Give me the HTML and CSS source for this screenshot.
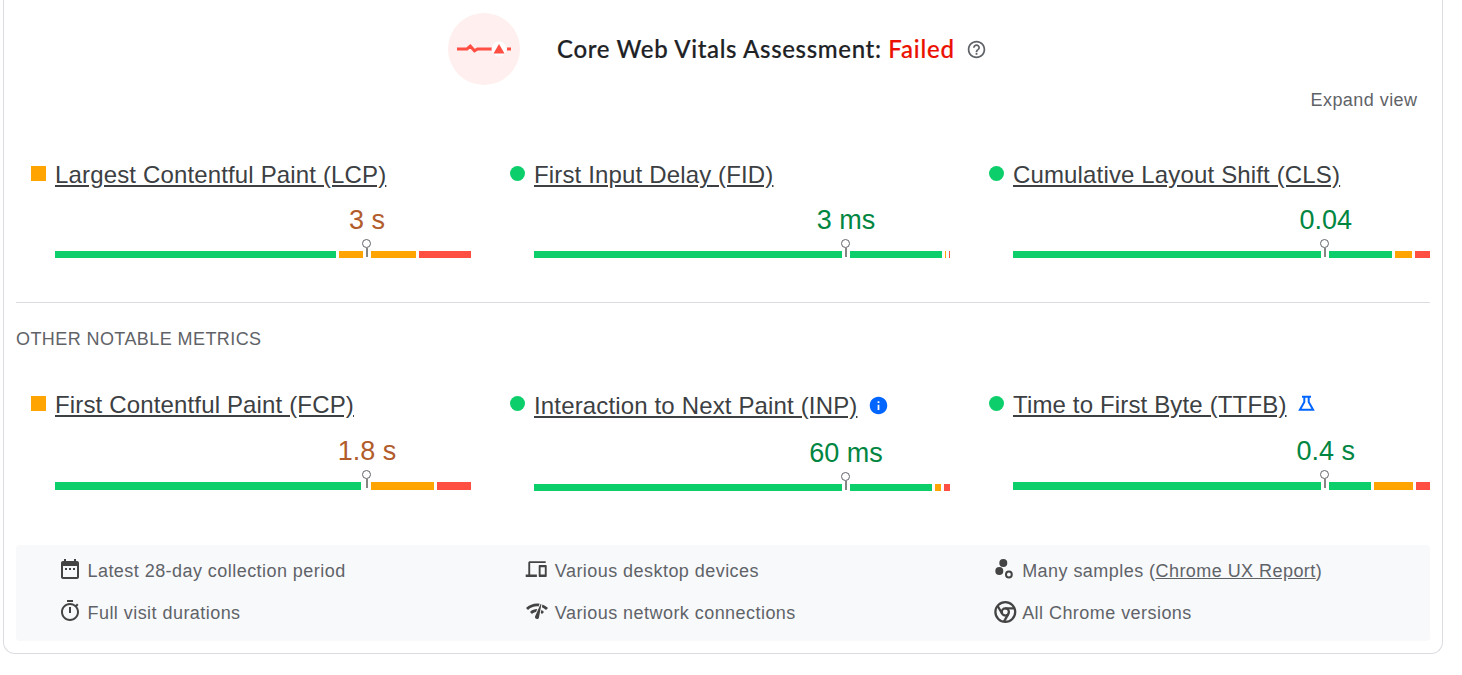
FILE: index.html
```html
<!DOCTYPE html>
<html lang="en">
<head>
  <meta charset="utf-8">
  <title>Core Web Vitals Assessment</title>
  <link rel="stylesheet" href="styles.css">
</head>
<body>
<div class="card">
  <div class="header">
    <svg class="pulse" width="72" height="72" viewBox="0 0 72 72">
      <circle cx="36" cy="36" r="36" fill="#ffefee"/>
      <path d="M9 36h10l3.300-2.800 4.200 4.600 3-1.800H45M59 36h4" fill="none" stroke="#ff4e42" stroke-width="3"/>
      <circle cx="51" cy="36" r="7.500" fill="#fff"/>
      <path d="M45.500 40.500 51 31l5.500 9.500z" fill="#ff4e42"/>
    </svg>
    <div class="title">Core Web Vitals Assessment: <span class="failed">Failed</span></div>
    <svg class="help" width="21" height="21" viewBox="0 0 24 24">
      <path d="M11 18h2v-2h-2v2zm1-16C6.480 2 2 6.480 2 12s4.480 10 10 10 10-4.480 10-10S17.520 2 12 2zm0 18c-4.410 0-8-3.590-8-8s3.590-8 8-8 8 3.590 8 8-3.590 8-8 8zm0-14c-2.210 0-4 1.790-4 4h2c0-1.100.9-2 2-2s2 .9 2 2c0 2-3 1.750-3 5h2c0-2.250 3-2.500 3-5 0-2.210-1.790-4-4-4z"/>
    </svg>
  </div>
  <div class="expand">Expand view</div>

  <div class="metrics">
    <div class="metric average">
      <span class="marker"></span>
      <div class="name"><a>Largest Contentful Paint (LCP)</a></div>
      <div class="value"><span>3 s</span></div>
      <div class="bar">
        <i class="good" style="flex-grow:281"></i><i class="mid" style="flex-grow:77"></i><i class="poor" style="flex-grow:52"></i>
        <span class="pin"></span>
      </div>
    </div>
    <div class="metric fast">
      <span class="marker"></span>
      <div class="name"><a>First Input Delay (FID)</a></div>
      <div class="value"><span>3 ms</span></div>
      <div class="bar">
        <i class="good" style="flex-grow:408"></i><i class="mid" style="flex-grow:1"></i><i class="poor" style="flex-grow:1"></i>
        <span class="pin"></span>
      </div>
    </div>
    <div class="metric fast">
      <span class="marker"></span>
      <div class="name"><a>Cumulative Layout Shift (CLS)</a></div>
      <div class="value"><span>0.04</span></div>
      <div class="bar">
        <i class="good" style="flex-grow:379"></i><i class="mid" style="flex-grow:17"></i><i class="poor" style="flex-grow:15"></i>
        <span class="pin"></span>
      </div>
    </div>
  </div>

  <div class="subtitle">OTHER NOTABLE METRICS</div>

  <div class="metrics other">
    <div class="metric average">
      <span class="marker"></span>
      <div class="name"><a>First Contentful Paint (FCP)</a></div>
      <div class="value"><span>1.8 s</span></div>
      <div class="bar">
        <i class="good" style="flex-grow:306"></i><i class="mid" style="flex-grow:70"></i><i class="poor" style="flex-grow:34"></i>
        <span class="pin"></span>
      </div>
    </div>
    <div class="metric fast inp">
      <span class="marker"></span>
      <div class="name"><a>Interaction to Next Paint (INP)</a>
        <svg class="info" width="21" height="21" viewBox="0 0 24 24"><path d="M12 2C6.480 2 2 6.480 2 12s4.480 10 10 10 10-4.480 10-10S17.520 2 12 2zm1 15h-2v-6h2v6zm0-8h-2V7h2v2z"/></svg>
      </div>
      <div class="value"><span>60 ms</span></div>
      <div class="bar">
        <i class="good" style="flex-grow:398"></i><i class="mid" style="flex-grow:6"></i><i class="poor" style="flex-grow:6"></i>
        <span class="pin"></span>
      </div>
    </div>
    <div class="metric fast">
      <span class="marker"></span>
      <div class="name"><a>Time to First Byte (TTFB)</a>
        <svg class="flask" width="17" height="17" viewBox="0 0 17 17"><path d="M4 1.800h9M6.300 2v5L1.900 14.800h13.200L10.700 7V2"/></svg>
      </div>
      <div class="value"><span>0.4 s</span></div>
      <div class="bar">
        <i class="good" style="flex-grow:358"></i><i class="mid" style="flex-grow:39"></i><i class="poor" style="flex-grow:14"></i>
        <span class="pin"></span>
      </div>
    </div>
  </div>

  <div class="footer">
    <div class="item">
      <svg width="24" height="24" viewBox="0 0 24 24"><path d="M9 11H7v2h2v-2zm4 0h-2v2h2v-2zm4 0h-2v2h2v-2zm2-7h-1V2h-2v2H8V2H6v2H5c-1.110 0-1.990.9-1.990 2L3 20c0 1.100.89 2 2 2h14c1.100 0 2-.9 2-2V6c0-1.100-.9-2-2-2zm0 16H5V9h14v11z"/></svg>
      <span>Latest 28-day collection period</span>
    </div>
    <div class="item">
      <svg width="24" height="24" viewBox="0 0 24 24"><path fill-rule="evenodd" d="M20.700 4.200H5c-1 0-1.700.7-1.700 1.700v11.500H.7V20h11.200v-2.600H5.200V6h15.500zM14.700 8h6c.6 0 1 .4 1 1v10c0 .6-.4 1-1 1h-6c-.6 0-1-.4-1-1V9c0-.6.4-1 1-1zm.9 2.200v7.200h4.200v-7.200z"/></svg>
      <span>Various desktop devices</span>
    </div>
    <div class="item">
      <svg width="24" height="24" viewBox="0 0 24 24">
        <circle cx="10.300" cy="6" r="4"/><circle cx="6.300" cy="14" r="4"/>
        <circle class="line" cx="15.900" cy="17.500" r="2.900"/>
      </svg>
      <span>Many samples (<a>Chrome UX Report</a>)</span>
    </div>
    <div class="item">
      <svg width="24" height="24" viewBox="0 0 24 24"><path d="M15 1H9v2h6V1zm-4 13h2V8h-2v6zm8.030-6.610l1.420-1.420c-.43-.51-.9-.99-1.410-1.410l-1.420 1.420C16.070 4.740 14.120 4 12 4c-4.970 0-9 4.030-9 9s4.020 9 9 9 9-4.030 9-9c0-2.120-.74-4.070-1.970-5.610zM12 20c-3.870 0-7-3.130-7-7s3.130-7 7-7 7 3.130 7 7-3.130 7-7 7z"/></svg>
      <span>Full visit durations</span>
    </div>
    <div class="item">
      <svg width="24" height="24" viewBox="0 0 24 24"><path d="M15.900 5c-.17 0-.32.09-.41.23l-.07.15-5.180 11.650c-.16.29-.26.61-.26.96 0 1.110.9 2.010 2.010 2.010.96 0 1.770-.68 1.960-1.590l.01-.03L16.400 5.500c0-.28-.22-.5-.5-.5zM1 9l2 2c2.880-2.880 6.790-4.080 10.530-3.620l1.190-2.680C9.890 3.840 4.740 5.270 1 9zm20 2l2-2c-1.640-1.640-3.550-2.820-5.590-3.570l-.53 2.820c1.500.62 2.900 1.530 4.120 2.750zm-4 4l2-2c-.8-.8-1.700-1.420-2.660-1.890l-.55 2.920c.42.27.83.59 1.210.97zM5 13l2 2c1.130-1.130 2.560-1.790 4.030-2l1.280-2.880c-2.630-.08-5.300.87-7.310 2.880z"/></svg>
      <span>Various network connections</span>
    </div>
    <div class="item">
      <svg width="24" height="24" viewBox="0 0 24 24">
        <g class="line thick">
          <circle cx="12.300" cy="13" r="9.900"/><circle cx="12.300" cy="13" r="3.600"/>
          <path d="M12.300 9.400h9"/>
          <path d="M12.300 9.400h9" transform="rotate(120 12.300 13)"/>
          <path d="M12.300 9.400h9" transform="rotate(240 12.300 13)"/>
        </g>
      </svg>
      <span>All Chrome versions</span>
    </div>
  </div>
</div>
</body>
</html>
```
FILE: styles.css
```css
body {
  margin: 0;
  background: #fff;
  font-family: "Liberation Sans", Arial, sans-serif;
  font-size: 18px;
  line-height: 27px;
  letter-spacing: 0.45px;
  color: #5f6368;
}
.card {
  box-sizing: border-box;
  width: 1440px;
  height: 654px;
  margin-left: 3px;
  padding: 13px 12px 0;
  border: 1px solid #dadce0;
  border-top: none;
  border-radius: 0 0 12px 12px;
}

/* assessment header */
.header {
  display: flex;
  align-items: center;
  height: 72px;
  padding-left: 432px;
}
.title {
  margin-left: 37px;
  font-family: Lato, sans-serif;
  font-size: 24px;
  font-weight: 500;
  line-height: 36px;
  letter-spacing: 0.66px;
  color: #202124;
  white-space: nowrap;
  -webkit-text-stroke: 0.2px;
}
.failed {
  letter-spacing: 0.8px;
  color: #eb0f00;
}
.help {
  margin-left: 11px;
  fill: #5f6368;
}
.expand {
  margin-top: 2px;
  padding-right: 12.5px;
  text-align: right;
}

/* metrics */
.metrics {
  display: grid;
  grid-template-columns: 455px 455px 1fr;
  column-gap: 24px;
  height: 101px;
  margin-top: 43px;
  padding-bottom: 44px;
  border-bottom: 1px solid #dadce0;
}
.metric {
  display: grid;
  grid-template-columns: 15px 1fr;
  grid-template-rows: 36px 36px 7px;
  column-gap: 9px;
  align-content: start;
  padding-left: 15px;
}
.marker {
  width: 15px;
  height: 15px;
  margin-top: 9px;
}
.average .marker {
  background: #ffa400;
}
.fast .marker {
  border-radius: 50%;
  background: #0cce6b;
}
.name {
  display: flex;
  align-items: center;
  font-size: 24px;
  line-height: 36px;
  letter-spacing: 0.15px;
  color: #3c4043;
  white-space: nowrap;
}
.name a {
  text-decoration: underline;
}
.value {
  grid-column: 2;
  display: flex;
  justify-content: center;
  margin-top: 9px;
  /* centres the value on the 75% mark */
  padding-left: 50%;
  font-size: 27px;
  line-height: 36px;
  letter-spacing: 0;
  white-space: nowrap;
}
.average .value {
  color: #b25c2b;
}
.fast .value {
  color: #018642;
}
.bar {
  grid-column: 2;
  position: relative;
  display: flex;
  gap: 3px;
  height: 7px;
  margin-top: 22px;
}
.bar i {
  flex: 1 1 0;
}
.good {
  background: #0cce6b;
}
.mid {
  background: #ffa400;
}
.poor {
  background: #ff4e42;
}
.pin {
  position: absolute;
  left: 312px;
  top: 0;
  width: 8px;
  height: 100%;
  margin-left: -4px;
  background: #fff;
}
.pin::before {
  content: "";
  position: absolute;
  left: -1px;
  top: -12px;
  box-sizing: border-box;
  width: 9px;
  height: 9px;
  border: 1.5px solid #5f6368;
  border-radius: 50%;
}
.pin::after {
  content: "";
  position: absolute;
  left: 3px;
  top: -3px;
  width: 2px;
  height: 9px;
  background: #858684;
}

.subtitle {
  margin-top: 23px;
  letter-spacing: 0.42px;
}
.other {
  height: 104px;
  margin-top: 34px;
  padding-bottom: 0;
  border: none;
}
.other .value {
  margin-top: 10px;
}
.other .bar {
  height: 8px;
  margin-top: 23px;
}
.other .inp .name {
  margin-top: 1px;
  margin-bottom: -1px;
}
.other .inp .value {
  margin-top: 12px;
}
.other .inp .bar {
  height: 7px;
  margin-top: 25px;
}
.info {
  margin: -1px 0 0 11px;
  fill: #06f;
}
.flask {
  margin: -4px 0 0 11.5px;
  fill: none;
  stroke: #06f;
  stroke-width: 2;
}

/* collection details */
.footer {
  display: grid;
  grid-template-columns: repeat(3, 467.33px);
  grid-auto-rows: 27px;
  row-gap: 15px;
  box-sizing: border-box;
  height: 96px;
  margin-top: 54px;
  padding: 12px 0 0 42px;
  border-radius: 4px;
  background: #f8f9fb;
  overflow: hidden;
}
.item {
  display: flex;
  align-items: center;
  gap: 5.5px;
  white-space: nowrap;
}
.item span {
  padding-top: 2px;
}
.item svg {
  flex: none;
  margin-top: -3px;
  fill: #444;
  overflow: visible;
}
.item svg .line {
  fill: none;
  stroke: #444;
  stroke-width: 2;
}
.item svg .thick {
  stroke-width: 2.3;
}
.item a {
  text-decoration: underline;
}
```
